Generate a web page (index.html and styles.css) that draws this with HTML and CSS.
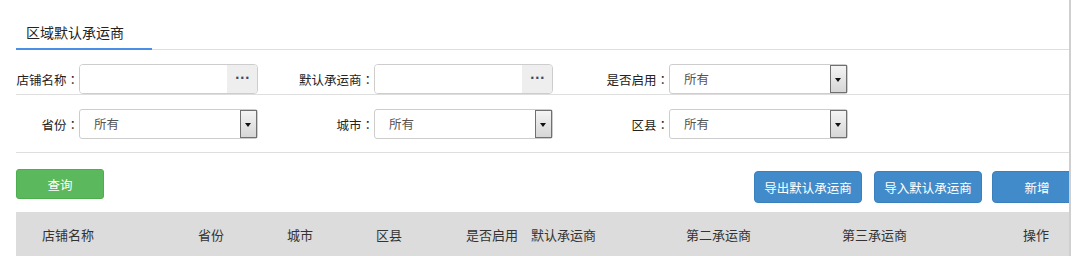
FILE: index.html
```html
<!DOCTYPE html>
<html lang="zh-CN">
<head>
<meta charset="utf-8">
<title>区域默认承运商</title>
<link rel="stylesheet" href="styles.css">
</head>
<body>
<div class="page">
  <div class="tabs">
    <div class="tab active">区域默认承运商</div>
  </div>

  <div class="form-row first">
    <div class="field">
      <label>店铺名称<span class="colon">：</span></label>
      <div class="picker"><span class="picker-input"></span><span class="picker-btn">···</span></div>
    </div>
    <div class="field">
      <label>默认承运商<span class="colon">：</span></label>
      <div class="picker"><span class="picker-input"></span><span class="picker-btn">···</span></div>
    </div>
    <div class="field">
      <label>是否启用<span class="colon">：</span></label>
      <div class="select"><span class="select-text">所有</span><span class="select-arrow"></span></div>
    </div>
  </div>

  <div class="form-row second">
    <div class="field">
      <label>省份<span class="colon">：</span></label>
      <div class="select"><span class="select-text">所有</span><span class="select-arrow"></span></div>
    </div>
    <div class="field">
      <label>城市<span class="colon">：</span></label>
      <div class="select"><span class="select-text">所有</span><span class="select-arrow"></span></div>
    </div>
    <div class="field">
      <label>区县<span class="colon">：</span></label>
      <div class="select"><span class="select-text">所有</span><span class="select-arrow"></span></div>
    </div>
  </div>

  <div class="toolbar">
    <button class="btn btn-green">查询</button>
    <div class="toolbar-right">
      <button class="btn btn-blue btn-export">导出默认承运商</button>
      <button class="btn btn-blue btn-import">导入默认承运商</button>
      <button class="btn btn-blue btn-add">新增</button>
    </div>
  </div>

  <div class="table-head">
    <div class="th c1">店铺名称</div>
    <div class="th c2">省份</div>
    <div class="th c3">城市</div>
    <div class="th c4">区县</div>
    <div class="th c5">是否启用</div>
    <div class="th c6">默认承运商</div>
    <div class="th c7">第二承运商</div>
    <div class="th c8">第三承运商</div>
    <div class="th c9">操作</div>
  </div>
</div>
</body>
</html>
```

FILE: styles.css
```css
* { box-sizing: border-box; }

html, body {
  margin: 0;
  padding: 0;
  background: #fff;
  font-family: "Noto Sans CJK SC", "Microsoft YaHei", "Noto Sans", sans-serif;
  color: #333;
  font-size: 12px;
}

.page {
  margin-left: 16px;
  width: 1055px;
  height: 256px;
  border-right: 2px solid #cfcfcf;
  overflow: hidden;
}

/* tabs */
.tabs {
  display: flex;
  padding-top: 16px;
  border-bottom: 1px solid #dedede;
}
.tab {
  width: 136px;
  height: 34px;
  line-height: 32px;
  padding-left: 10px;
  font-size: 14px;
  color: #222;
  margin-bottom: -1px;
}
.tab.active { border-bottom: 2px solid #4a8fe7; }

/* form rows */
.form-row {
  display: flex;
  border-bottom: 1px solid #dedede;
}
.form-row.first { padding-top: 14px; }
.form-row.second { padding-top: 14px; padding-bottom: 13px; }

.field {
  display: flex;
  align-items: center;
  width: 295px;
  height: 30px;
}
.field label {
  width: 63px;
  display: flex;
  justify-content: flex-end;
  white-space: nowrap;
  font-size: 12.5px;
  color: #222;
}
.colon {
  font-family: "Noto Sans CJK JP", "Noto Sans CJK SC", sans-serif;
}

.picker {
  display: flex;
  width: 179px;
  height: 30px;
  border: 1px solid #cdcdcd;
  border-radius: 4px;
  overflow: hidden;
}
.picker-input { flex: 1; background: #fff; }
.picker-btn {
  width: 30px;
  background: #eeeeee;
  color: #3d4860;
  font-size: 12px;
  font-weight: bold;
  line-height: 26px;
  text-align: center;
  letter-spacing: 0.5px;
  padding-left: 1px;
  font-family: "DejaVu Sans", sans-serif;
}

.select {
  display: flex;
  align-items: stretch;
  width: 179px;
  height: 30px;
  border: 1px solid #cdcdcd;
  border-radius: 3px;
}
.select-text {
  flex: 1;
  padding-left: 14px;
  line-height: 28px;
  font-size: 12.5px;
  color: #555;
}
.select-arrow {
  width: 17px;
  border: 1px solid #707070;
  background: linear-gradient(#f4f4f4, #d6d6d6);
  position: relative;
}
.select-arrow::after {
  content: "";
  position: absolute;
  left: 4px;
  top: 12px;
  border-left: 3.5px solid transparent;
  border-right: 3.5px solid transparent;
  border-top: 4px solid #111;
}

/* toolbar */
.toolbar {
  display: flex;
  justify-content: space-between;
  align-items: flex-start;
  height: 59px;
}
.btn {
  border: none;
  color: #fff;
  font-family: inherit;
  font-size: 12.5px;
  padding: 0;
  cursor: pointer;
}
.btn-green {
  margin-top: 16px;
  width: 88px;
  height: 30px;
  background: #5cb85c;
  border: 1px solid #4cae4c;
  border-radius: 3px;
}
.toolbar-right {
  display: flex;
  margin-top: 18px;
  margin-right: -13px;
}
.btn-blue {
  width: 108px;
  height: 32px;
  background: #428bca;
  border: 1px solid #3a80bd;
  border-radius: 4px;
}
.btn-import { margin-left: 12px; }
.btn-add { width: 90px; margin-left: 10px; }

/* table header */
.table-head {
  display: grid;
  grid-template-columns: 26px 156px 89px 89px 90px 65px 155px 156px 181px 1fr;
  height: 44px;
  align-items: center;
  background: #dcdcdc;
  font-size: 13px;
  color: #333;
}
.th { white-space: nowrap; }
.c1 { grid-column: 2; }
.c2 { grid-column: 3; }
.c3 { grid-column: 4; }
.c4 { grid-column: 5; }
.c5 { grid-column: 6; }
.c6 { grid-column: 7; }
.c7 { grid-column: 8; }
.c8 { grid-column: 9; }
.c9 { grid-column: 10; }
```
